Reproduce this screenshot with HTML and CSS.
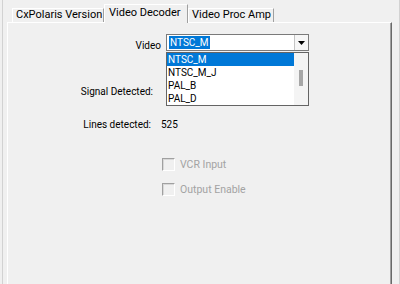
FILE: index.html
```html
<!DOCTYPE html>
<html lang="en">
<head>
    <meta charset="UTF-8">
    <meta name="viewport" content="width=device-width, initial-scale=1.0">
    <title>Video Decoder</title>
    <link rel="stylesheet" href="styles.css">
</head>
<body>
    <div class="frame">
        <div class="tabs">
            <div class="tab tab-version">CxPolaris Version</div>
            <div class="tab tab-decoder active">Video Decoder</div>
            <div class="tab tab-procamp">Video Proc Amp</div>
        </div>

        <div class="panel">
            <div class="row video-row">
                <label class="label video-label">Video</label>
                <div class="combo">
                    <div class="combo-field"><span class="selected-text">NTSC_M</span></div>
                    <div class="combo-btn">
                        <svg width="7" height="4" viewBox="0 0 7 4"><path d="M0 0H7L3.5 4Z" fill="#000"/></svg>
                    </div>
                    <div class="droplist">
                        <ul class="items">
                            <li class="item current">NTSC_M</li>
                            <li class="item">NTSC_M_J</li>
                            <li class="item">PAL_B</li>
                            <li class="item">PAL_D</li>
                        </ul>
                        <div class="scrollbar"><div class="thumb"></div></div>
                    </div>
                </div>
            </div>

            <div class="row signal-row">
                <span class="label">Signal Detected:</span>
            </div>

            <div class="row lines-row">
                <span class="label lines-label">Lines detected:</span>
                <span class="value">525</span>
            </div>

            <div class="checks">
                <div class="check"><span class="box"></span>VCR Input</div>
                <div class="check"><span class="box"></span>Output Enable</div>
            </div>
        </div>
    </div>
</body>
</html>
```

FILE: styles.css
```css
body {
    margin: 0;
    padding: 0 0 0 2px;
    background-color: #f0f0f0;
    font-family: Roboto, "Noto Sans", sans-serif;
    font-size: 11px;
    color: #000;
    overflow: hidden;
}

.frame {
    width: 398px;
    height: 284px;
    box-sizing: border-box;
    border-left: 1px solid #d2d2d2;
    border-right: 1px solid #d2d2d2;
}

/* tab strip */
.tabs {
    display: flex;
    align-items: flex-end;
    height: 22px;
    padding-left: 9px;
}

.tab {
    box-sizing: border-box;
    height: 14px;
    padding-left: 3px;
    line-height: 11px;
    border-top: 1px solid #fff;
    border-left: 1px solid #fff;
    border-right: 1px solid #a0a0a0;
    white-space: nowrap;
}

.tab-version {
    width: 92px;
}

.tab-decoder {
    width: 84px;
}

.tab-procamp {
    width: 86px;
}

.tab.active {
    height: 19px;
    margin-bottom: -1px;
    padding-left: 4px;
    line-height: 15px;
    background-color: #f0f0f0;
    position: relative;
    z-index: 1;
}

.panel {
    box-sizing: border-box;
    width: 385px;
    height: 262px;
    margin-left: 4px;
    border-top: 1px solid #fff;
    border-left: 1px solid #fff;
    border-right: 1px solid #696969;
    box-shadow: inset -1px 0 #a0a0a0;
    font-size: 10px;
}

.row {
    display: flex;
    align-items: center;
    line-height: 15px;
}

.label {
    width: 145px;
    text-align: right;
    white-space: nowrap;
}

.lines-label {
    width: 143px;
}

/* video selector */
.video-row {
    margin-top: 11px;
    height: 17px;
}

.video-label {
    width: 153px;
    margin-right: 5px;
    padding-top: 6px;
}

.combo {
    position: relative;
    width: 143px;
    height: 17px;
}

.combo-field {
    box-sizing: border-box;
    height: 17px;
    padding: 1px 0 0 2px;
    border: 1px solid #7a7a7a;
    background-color: #fff;
    line-height: 13px;
}

.selected-text {
    display: inline-block;
    padding: 0 1px;
    background-color: #0078d7;
    color: #fff;
}

.combo-btn {
    position: absolute;
    top: 1px;
    right: 1px;
    width: 14px;
    height: 15px;
    box-sizing: border-box;
    border-left: 1px solid #c4c4c4;
    background-color: #f6f6f6;
    display: flex;
    align-items: center;
    justify-content: center;
}

.droplist {
    position: absolute;
    top: 18px;
    left: 0;
    width: 143px;
    height: 54px;
    box-sizing: border-box;
    border: 1px solid #646464;
    background-color: #fff;
    display: flex;
    z-index: 2;
}

.items {
    list-style: none;
    margin: 0;
    padding: 0;
    flex: 1;
}

.item {
    height: 13px;
    line-height: 13px;
    padding-left: 1px;
}

.item.current {
    background-color: #0078d7;
    color: #fff;
}

.scrollbar {
    width: 14px;
    background-color: #f4f4f4;
    position: relative;
}

.thumb {
    position: absolute;
    top: 17px;
    left: 5px;
    width: 4px;
    height: 16px;
    background-color: #a6a6a6;
}

/* status lines */
.signal-row {
    margin-top: 33px;
}

.lines-row {
    margin-top: 18px;
}

.value {
    margin-left: 10px;
}

/* disabled checkboxes */
.checks {
    margin: 25px 0 0 154px;
    display: flex;
    flex-direction: column;
    gap: 10px;
    color: #a3a3a3;
    font-size: 10.5px;
}

.check {
    display: flex;
    align-items: center;
    height: 15px;
    line-height: 15px;
}

.box {
    width: 11px;
    height: 11px;
    margin-right: 5px;
    border-style: solid;
    border-width: 1px;
    border-color: #a0a0a0 #fff #fff #a0a0a0;
    box-shadow: inset 1px 1px #d8d8d8;
}
```
